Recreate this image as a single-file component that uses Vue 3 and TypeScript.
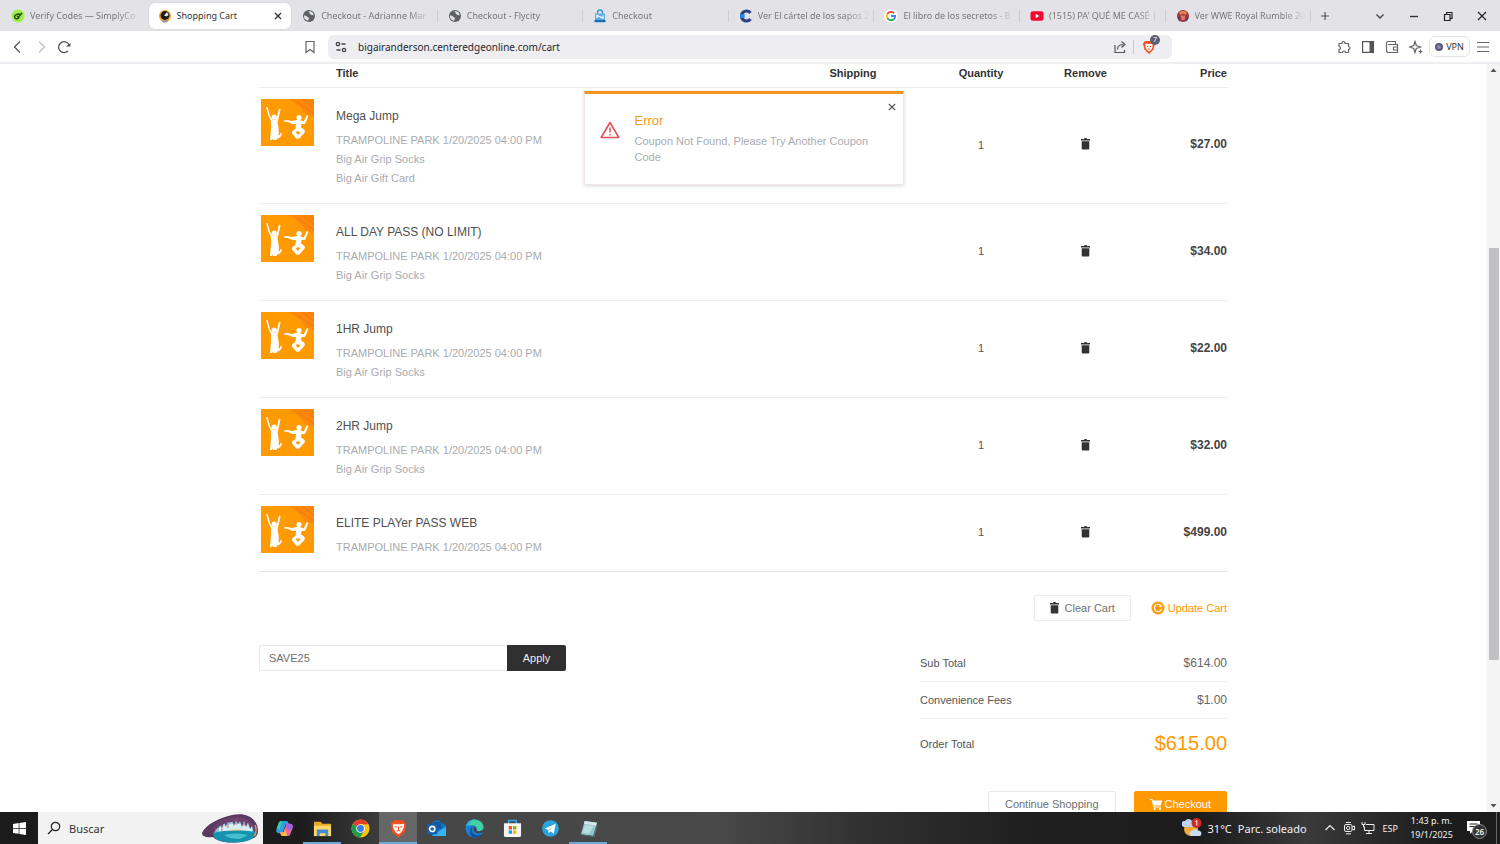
<script setup lang="ts">
import { ref } from 'vue'

interface Tab { title: string; icon: string; active?: boolean }
interface CartItem { title: string; lines: string[]; qty: number; price: string }

const tabs: Tab[] = [
  { title: 'Verify Codes — SimplyCo', icon: 'simply' },
  { title: 'Shopping Cart', icon: 'cart', active: true },
  { title: 'Checkout - Adrianne Mar', icon: 'globe' },
  { title: 'Checkout - Flycity', icon: 'globe' },
  { title: 'Checkout', icon: 'bag' },
  { title: 'Ver El cártel de los sapos 2', icon: 'cuevana' },
  { title: 'El libro de los secretos - B', icon: 'google' },
  { title: "(1515) PA' QUÉ ME CASÉ |", icon: 'youtube' },
  { title: 'Ver WWE Royal Rumble 20', icon: 'wwe' },
]

const park = 'TRAMPOLINE PARK 1/20/2025 04:00 PM'
const socks = 'Big Air Grip Socks'
const items: CartItem[] = [
  { title: 'Mega Jump', lines: [park, socks, 'Big Air Gift Card'], qty: 1, price: '$27.00' },
  { title: 'ALL DAY PASS (NO LIMIT)', lines: [park, socks], qty: 1, price: '$34.00' },
  { title: '1HR Jump', lines: [park, socks], qty: 1, price: '$22.00' },
  { title: '2HR Jump', lines: [park, socks], qty: 1, price: '$32.00' },
  { title: 'ELITE PLAYer PASS WEB', lines: [park], qty: 1, price: '$499.00' },
]

const apps = ['copilot', 'explorer', 'chrome', 'brave', 'outlook', 'edge', 'store', 'telegram', 'notepad']
const running = ['explorer', 'brave', 'notepad']
const coupon = ref('SAVE25')
const url = ref('bigairanderson.centeredgeonline.com/cart')
const search = ref('')
const toastOpen = ref(true)
</script>

<template>
  <div class="screen">
    <header class="tabbar">
      <div class="tabs" role="tablist">
        <button v-for="(t, i) in tabs" :key="i" class="tab" :class="{ active: t.active, split: i > 1 }" role="tab" :aria-selected="!!t.active">
          <svg class="fav" viewBox="0 0 14 14" aria-hidden="true">
            <template v-if="t.icon === 'simply'">
              <circle cx="7" cy="7" r="6.5" fill="#9df04a" />
              <path d="M11 3.800L7.400 8.200 6 7M8.600 5.200C6.400 4.600 3.600 6 3.600 8c0 2.200 3.400 2.200 4.800.6" fill="none" stroke="#26421a" stroke-width="1.400" />
            </template>
            <template v-else-if="t.icon === 'cart'">
              <circle cx="7" cy="7" r="6" fill="#efa029" />
              <circle cx="7" cy="6.500" r="4.400" fill="#1c1a1c" />
              <path d="M6 6.500l3-3.500 1.500 3-2 1.500z" fill="#e8eef5" />
              <path d="M4 11.500h6l-1 2H5z" fill="#8c99a8" />
            </template>
            <template v-else-if="t.icon === 'globe'">
              <circle cx="7" cy="7" r="6" fill="#5d6064" />
              <path d="M2 6.500c1.200 0 2.600.300 3.200 1.200.5.900 1.800.5 1.900 1.600 0 .900-.8 1-.9 2.400C3.500 11.300 1.700 9 2 6.500zM6.500 2.200c.2 1.200 1.200 1 1.200 2 0 .8.900 1 1.500 1.500.6.600 1.500.300 2.300.9C12 4 9.500 1.800 6.500 2.200z" fill="#e3e2e7" />
            </template>
            <template v-else-if="t.icon === 'bag'">
              <path d="M4.500 5V3.500a2.500 2.500 0 0 1 5 0V5" fill="none" stroke="#3b93d0" stroke-width="1.300" />
              <path d="M2 4.500h10V13H2z" fill="#5daee0" />
              <path d="M4 9V6.500l6 2.500V6.500" fill="none" stroke="#fff" stroke-width="1.200" />
              <path d="M1.500 11h11v2.200h-11z" fill="#1b6cae" />
            </template>
            <template v-else-if="t.icon === 'cuevana'">
              <path d="M11.500 4A5 5 0 1 0 11.500 10" fill="none" stroke="#2d3f86" stroke-width="3.200" />
              <path d="M1.200 7h4.500" stroke="#1f8cf0" stroke-width="3.500" />
            </template>
            <template v-else-if="t.icon === 'google'">
              <circle cx="7" cy="7" r="6.800" fill="#fff" />
              <path d="M10.200 4.200A4.300 4.300 0 0 0 3.300 5" fill="none" stroke="#ea4335" stroke-width="1.800" />
              <path d="M3.300 5a4.300 4.300 0 0 0 0 4" fill="none" stroke="#fbbc05" stroke-width="1.800" />
              <path d="M3.300 9a4.300 4.300 0 0 0 6.500 1.300" fill="none" stroke="#34a853" stroke-width="1.800" />
              <path d="M7 7h4.200a4.300 4.300 0 0 1-1.400 3.300" fill="none" stroke="#4285f4" stroke-width="1.800" />
            </template>
            <template v-else-if="t.icon === 'youtube'">
              <rect x=".5" y="2.200" width="13" height="9.600" rx="2.400" fill="#f8042f" />
              <path d="M5.600 4.800v4.400L9.400 7z" fill="#fff" />
            </template>
            <template v-else>
              <circle cx="7" cy="7" r="6" fill="#a8323a" />
              <path d="M3 3.500c2-2 6-2 8 0L9.500 6 7 4.500 4.500 6z" fill="#d98a4a" />
              <path d="M4.500 6.500h5L8.500 11h-3z" fill="#d67b70" />
              <path d="M2 8l2 4M12 8l-2 4" stroke="#47405f" stroke-width="1.500" />
            </template>
          </svg>
          <span class="tab-title">{{ t.title }}</span>
          <svg v-if="t.active" class="tab-close" viewBox="0 0 8 8" aria-hidden="true"><path d="M1 1l6 6M7 1L1 7" stroke="#333" stroke-width="1.400" /></svg>
        </button>
      </div>
      <button class="win plus" aria-label="New tab"><svg viewBox="0 0 12 12"><path d="M6 2v8M2 6h8" stroke="#55555a" stroke-width="1.200" /></svg></button>
      <div class="wins">
        <button class="win" aria-label="Search tabs"><svg viewBox="0 0 12 12"><path d="M2.500 4.500L6 8l3.500-3.500" fill="none" stroke="#444" stroke-width="1.400" /></svg></button>
        <button class="win" aria-label="Minimize"><svg viewBox="0 0 12 12"><path d="M2 6.500h8" stroke="#333" stroke-width="1.400" /></svg></button>
        <button class="win" aria-label="Restore"><svg viewBox="0 0 12 12"><path d="M2.500 4.500h5.500v6H2.500zM4.500 4.500V2.500h5.500v6H8" fill="none" stroke="#222" stroke-width="1.200" /></svg></button>
        <button class="win" aria-label="Close window"><svg viewBox="0 0 12 12"><path d="M2 2l8 8M10 2l-8 8" stroke="#222" stroke-width="1.200" /></svg></button>
      </div>
    </header>

    <nav class="toolbar" aria-label="Browser">
      <div class="nav-left">
        <button class="tool" aria-label="Back"><svg viewBox="0 0 16 16"><path d="M10 2.500L4.500 8l5.500 5.500" fill="none" stroke="#555" stroke-width="1.300" /></svg></button>
        <button class="tool" aria-label="Forward"><svg viewBox="0 0 16 16"><path d="M6 2.500L11.500 8 6 13.500" fill="none" stroke="#c4c4c6" stroke-width="1.300" /></svg></button>
        <button class="tool" aria-label="Reload"><svg viewBox="0 0 16 16"><path d="M12 12A5.500 5.500 0 1 1 13.500 7" fill="none" stroke="#555" stroke-width="1.300" /><path d="M10 7.600h4.500V4z" fill="#555" /></svg></button>
        <button class="tool mark" aria-label="Bookmark"><svg viewBox="0 0 16 16"><path d="M4 2.500h8v11L8 10.500 4 13.500z" fill="none" stroke="#66666a" stroke-width="1.200" /></svg></button>
      </div>
      <div class="omnibox">
        <button class="tool" aria-label="Site information"><svg viewBox="0 0 16 16" fill="none" stroke="#444" stroke-width="1.300"><circle cx="5" cy="5" r="1.700" /><path d="M8.500 5h4M3.500 11h4" /><circle cx="11" cy="11" r="1.700" /></svg></button>
        <input v-model="url" class="url" aria-label="Address" />
        <button class="tool" aria-label="Share"><svg viewBox="0 0 16 16" fill="none" stroke="#555" stroke-width="1.200"><path d="M3 6v7.500h9.500V11M5.500 10.500c0-3.500 2-5 6-5M9.500 2.500l3.500 3-3.500 3" /></svg></button>
        <span class="bar"></span>
        <button class="tool shield" aria-label="Shields">
          <svg viewBox="0 0 16 16"><path d="M4 2h8l2 2.500-1.500 6L8 15l-4.500-4.500L2 4.500z" fill="#f0501f" /><path d="M4.500 4.500L8 5l3.500-.5 0 4-1.500 2.500L8 12.500 6 11 4.500 8.500z" fill="#fff" /><path d="M6 7.500h1.200M8.800 7.500H10M7 10h2" stroke="#f0501f" /></svg>
          <span class="count">7</span>
        </button>
      </div>
      <div class="nav-right">
        <button class="tool" aria-label="Extensions"><svg viewBox="0 0 16 16"><path d="M3 4.500h3c-.5-2.700 3.500-2.700 3 0h3.500v3c2 .3 2 2.700 0 3v3H9.500c0-2-3-2-3 0H3v-3c2-.3 2-2.700 0-3z" fill="none" stroke="#66666a" stroke-width="1.200" /></svg></button>
        <button class="tool" aria-label="Sidebar"><svg viewBox="0 0 16 16"><path d="M2.600 2.600h10.800v10.800H2.600z" fill="none" stroke="#555" stroke-width="1.200" /><path d="M9.500 2.500h4v11h-4z" fill="#555" /></svg></button>
        <button class="tool" aria-label="Wallet"><svg viewBox="0 0 16 16" fill="none" stroke="#66666a" stroke-width="1.200"><path d="M2.500 4.500v7a2 2 0 0 0 2 2h9V5.500H4M2.500 4.500c0-1 .5-2 1.500-2h7.500v3M13.500 8H9.500v3h4" /></svg></button>
        <button class="tool" aria-label="Leo"><svg viewBox="0 0 16 16" fill="none" stroke="#66666a" stroke-width="1.200"><path d="M7 2.500l1.300 4L12.500 8l-4.200 1.500L7 13.500 5.700 9.500 1.800 8l3.900-1.500zM12.500 10.500v4M10.500 12.500h4" /></svg></button>
        <button class="vpn"><span class="vdot"></span>VPN</button>
        <button class="tool" aria-label="Menu"><svg viewBox="0 0 16 16"><path d="M2 3.500h12M2 8h12M2 12.500h12" stroke="#66666a" stroke-width="1.200" /></svg></button>
      </div>
    </nav>

    <div class="viewport">
      <main class="page">
        <div class="container">
          <table class="cart">
            <thead>
              <tr>
                <th class="c-img"></th>
                <th class="c-title">Title</th>
                <th class="c-mid">Shipping</th>
                <th class="c-mid">Quantity</th>
                <th class="c-rem">Remove</th>
                <th class="c-price">Price</th>
              </tr>
            </thead>
            <tbody>
              <tr v-for="item in items" :key="item.title">
                <td class="c-img">
                  <svg class="thumb" viewBox="0 0 53 47" role="img" aria-label="Trampoline jumpers">
                    <path d="M0 0h53v47H0z" fill="#ff9a03" />
                    <path d="M28 0h25v18l-8-2-6-8z" fill="#fb8a0c" />
                    <path d="M41 0l12 9M36 3l17 12M47 0l6 4" stroke="#f57c10" stroke-width="1.500" />
                    <g fill="#fff">
                      <path d="M5 8.500l1.500-.5 1.500 5 1 4 2.500 3.500h3.500l1.500-4 .5-4 1.200-2.800 1.300.3-.8 4.500-1.200 5-1 4 .8 4 .6 5-.3 4 1.600-.8.300-2 1.500.8-.8 2.500-2.700 2.500-1.500-.2-.2 1.700H12l-.3-1.700-.7 1.700H9l.6-7 .5-6-.3-6.500-2.300-4.500-1.300-5z" />
                      <circle cx="13.200" cy="18" r="2.600" />
                      <path d="M23 21.500l3-.4 5 .8 4-1 3-.2 4.500 1.700 2-3.500 1.300-3 1.500.5-1.200 4-2.100 4.500-3.500.2-.5 3.500 2.500 1.500 1.500 2-.7 2-3.300 3.500-1.500 1.800-3 .3-4.500-5.300.3-2.500 3.200-2 .5-5-3.500 0-4.500-1.800-4-.5z" />
                      <circle cx="38" cy="18.500" r="2.600" />
                    </g>
                    <path d="M34.500 33l2.500 3 2.500-3-2.500-.8z" fill="#ff9a03" />
                  </svg>
                </td>
                <td class="c-title">
                  <div class="name">{{ item.title }}</div>
                  <div v-for="l in item.lines" :key="l" class="line">{{ l }}</div>
                </td>
                <td></td>
                <td class="c-mid">{{ item.qty }}</td>
                <td class="c-rem">
                  <button class="trash" :aria-label="'Remove ' + item.title"><svg class="bin" viewBox="0 0 9 12"><path d="M0 1h3l.5-1h2L6 1h3v1.500H0zM.7 3.200h7.600V10.500a1 1 0 0 1-1 1H1.700a1 1 0 0 1-1-1z" fill="#333" /></svg></button>
                </td>
                <td class="c-price">{{ item.price }}</td>
              </tr>
            </tbody>
          </table>

          <div class="actions">
            <button class="btn"><svg class="bin" viewBox="0 0 9 12"><path d="M0 1h3l.5-1h2L6 1h3v1.500H0zM.7 3.200h7.600V10.500a1 1 0 0 1-1 1H1.700a1 1 0 0 1-1-1z" fill="#333" /></svg>Clear Cart</button>
            <a class="update" href="#"><svg viewBox="0 0 14 14"><circle cx="7" cy="7" r="6.500" fill="#ff9900" /><path d="M9.500 4.200A3.700 3.700 0 1 0 10.700 7.200" fill="none" stroke="#fff" stroke-width="1.200" /><path d="M7.500 5.500L10.500 3v3.200z" fill="#fff" /></svg>Update Cart</a>
          </div>

          <div class="lower">
            <form class="coupon" @submit.prevent>
              <input v-model="coupon" aria-label="Coupon code" />
              <button type="submit">Apply</button>
            </form>
            <section class="totals">
              <dl>
                <div><dt>Sub Total</dt><dd>$614.00</dd></div>
                <div><dt>Convenience Fees</dt><dd>$1.00</dd></div>
                <div class="grand"><dt>Order Total</dt><dd>$615.00</dd></div>
              </dl>
            </section>
          </div>

          <div class="finish">
            <button class="btn">Continue Shopping</button>
            <button class="btn primary"><svg class="basket" viewBox="0 0 12 12"><path d="M0 1h2.300l.5 1.500H12l-1.300 5H4.200l.3 1H11v1H3.500L1.700 2H0z" fill="#fff" /><circle cx="4.600" cy="10.900" r="1.100" fill="#fff" /><circle cx="9.900" cy="10.900" r="1.100" fill="#fff" /></svg>Checkout</button>
          </div>
        </div>

        <div v-if="toastOpen" class="toast" role="alert">
          <svg class="warn" viewBox="0 0 20 18"><path d="M10 1.500L1.200 16.500h17.600z" fill="none" stroke="#e2505c" stroke-width="1.600" stroke-linejoin="round" /><path d="M10 6.500v5M10 13v1.600" stroke="#e2505c" stroke-width="1.500" /></svg>
          <div class="toast-body">
            <strong>Error</strong>
            <p>Coupon Not Found, Please Try Another Coupon Code</p>
          </div>
          <button class="toast-close" aria-label="Dismiss" @click="toastOpen = false"><svg viewBox="0 0 8 8"><path d="M.8.8l6.400 6.400M7.200.8L.8 7.200" stroke="#444" stroke-width="1.100" /></svg></button>
        </div>
      </main>
      <div class="scroll" aria-hidden="true">
        <svg viewBox="0 0 13 13"><path d="M3.500 8h6l-3-3.500z" fill="#505050" /></svg>
        <div class="track"><div class="gap-top"></div><div class="knob"></div><div class="gap-bottom"></div></div>
        <svg viewBox="0 0 13 13"><path d="M3.500 5h6l-3 3.500z" fill="#505050" /></svg>
      </div>
    </div>

    <footer class="taskbar">
      <button class="start" aria-label="Start"><svg viewBox="0 0 13 13"><path d="M0 1.900l5.700-.8v5H0zM6.400 1L13 0v6.100H6.400zM0 6.800h5.700v5L0 11zM6.400 6.800H13V13l-6.600-1z" fill="#fff" /></svg></button>
      <label class="search">
        <svg class="lens" viewBox="0 0 14 14"><circle cx="8.500" cy="5.500" r="4.200" fill="none" stroke="#222" stroke-width="1.200" /><path d="M5.500 8.500L1 13" stroke="#222" stroke-width="1.200" /></svg>
        <input v-model="search" placeholder="Buscar" aria-label="Buscar" />
        <svg class="cave" viewBox="0 0 56 30">
          <path d="M0 20C3 13 12 8 20 5 30 1 40 0 46 3c7 3 10 9 10 15 0 5-3 7-7 8-4 2-12 3.500-19 3.500-8 0-15-1.500-19-5.500-5 1-11 0-11-4z" fill="#5a3a60" />
          <path d="M12 21c1-6 8-11 17-12 9-2 19 0 22 5l1 7z" fill="#8fd3e2" />
          <path d="M17 15c8-5 22-6 33-1v6l-33 1z" fill="#d9eef0" />
          <path d="M26 18c5-3 12-3 16 1v3H24z" fill="#f6d9a4" />
          <path d="M11 20c12-3 28-3 43-1-1 6-6 9-14 10-12 1.500-24 0-28-5z" fill="#1492ae" />
          <path d="M22 22c8-2 16-2 24 0l-8 4c-6 0-11-1-16-4z" fill="#46c0d0" />
          <path d="M8 20C9 13 18 7 28 5c9-2 19-1 24 8l0 6-2-6-2 3-2-7-2 5-2-6-2 6-2-6-2 3-2-4-2 6-2-6-2 3-2-3-2 7-2-6-2 7-2-5-2 6-2-4-2 5-2-3-2 4z" fill="#6d4270" />
          <path d="M14 15v4M20 12v6M26 9v6M34 7v5M42 8v5" stroke="#b5708f" stroke-width=".9" />
          <path d="M53 12c1.500 3 1.500 8-.5 11" fill="none" stroke="#e0936a" stroke-width="1.500" />
        </svg>
      </label>
      <div class="apps">
        <button v-for="a in apps" :key="a" class="app" :class="{ run: running.includes(a), focus: a === 'brave' }" :aria-label="a">
          <svg viewBox="0 0 20 20">
            <template v-if="a === 'copilot'">
              <path d="M7 2h6l2 4h-4l-3 9H4C1 15 1 12 2 9l2-5c.5-1.500 1.500-2 3-2z" fill="#2b9fe8" />
              <path d="M2 10l2-6c.5-1.500 1.500-2 3-2L5 11z" fill="#38cf9c" />
              <path d="M13 18H7l-2-4h4l3-9h4c3 0 3 3 2 6l-2 5c-.5 1.500-1.500 2-3 2z" fill="#e865a4" />
              <path d="M5 14h4l1.500-4L13 18H7z" fill="#f7b54a" />
              <path d="M12 5h4c3 0 3 3 2 6h-5z" fill="#9a63e8" />
            </template>
            <template v-else-if="a === 'explorer'">
              <path d="M1 3h7l2 2h9v13H1z" fill="#e8a928" /><path d="M1 7h18v11H1z" fill="#ffd667" /><path d="M4 11h12v7h-3v-3H7v3H4z" fill="#3b8fd8" />
            </template>
            <template v-else-if="a === 'chrome'">
              <circle cx="10" cy="10" r="9.500" fill="#fbc116" />
              <path d="M10 10L1.800 5.200A9.500 9.500 0 0 1 18.200 5.500H10z" fill="#e33b2e" />
              <path d="M10 10L1.800 5.200A9.500 9.500 0 0 0 9.500 19.500L14 12z" fill="#229a47" />
              <circle cx="10" cy="10" r="4.600" fill="#fff" /><circle cx="10" cy="10" r="3.600" fill="#3b7de9" />
            </template>
            <template v-else-if="a === 'brave'">
              <path d="M6 1h8l4 4-1.500 9L10 19.500 3.500 14 2 5z" fill="#f5501f" />
              <path d="M4.500 5L7 5.500h6l2.500-.5.500 3-2.500 5.500-3.500 2.500-3.500-2.500L4 8z" fill="#fff" />
              <path d="M6 8l2.500.6M14 8l-2.500.6M10 7.500v4M8 13l2-1 2 1" stroke="#f5501f" stroke-width="1.100" fill="none" />
            </template>
            <template v-else-if="a === 'outlook'">
              <path d="M6 3l6-2 8 6v11H5z" fill="#1474c4" /><path d="M7 3h8v7H7z" fill="#0f59a4" /><path d="M5 18l15-10v10z" fill="#35b4ef" />
              <rect x="0" y="5" width="11" height="11" rx="1" fill="#1060ad" /><circle cx="5.500" cy="10.500" r="2.700" fill="none" stroke="#fff" stroke-width="1.700" />
            </template>
            <template v-else-if="a === 'edge'">
              <circle cx="10" cy="10" r="9.500" fill="#1a7fd0" />
              <path d="M1 8C2 3 6 .500 10 .500c6 0 9.500 4 9.500 8 0 3-2.500 4.500-5 4.500-2 0-3-.5-2-2 .5-3-2-4.500-5-4.500S2 7 1 8z" fill="#45cfa6" />
              <path d="M1 8C2 3 6 .500 10 .500c-3 1-5 3-5.500 5.500z" fill="#2aafe0" />
              <path d="M8 8c-2 3-1 8 4 9 2 .4 4 0 5.500-1-2 3-6 4-9 3.300C5 18 4 11 8 8z" fill="#124f9e" />
              <path d="M10 8c-2 2-1 6 3 7 2.500.5 5-.5 6-1.500l.3-2.500-4 2c-3 0-4-1-3-2.500z" fill="#444" />
            </template>
            <template v-else-if="a === 'store'">
              <path d="M6 5V1.500h8V5" fill="none" stroke="#2aa9e8" stroke-width="1.600" /><path d="M1 4.500h18V17a2 2 0 0 1-2 2H3a2 2 0 0 1-2-2z" fill="#f5f5f5" />
              <path d="M6 7.500h3.500V11H6z" fill="#f25022" /><path d="M10.500 7.500H14V11h-3.500z" fill="#7fba00" /><path d="M6 12h3.500v3.500H6z" fill="#00a4ef" /><path d="M10.500 12H14v3.500h-3.500z" fill="#ffb900" />
            </template>
            <template v-else-if="a === 'telegram'">
              <circle cx="10" cy="10" r="8.800" fill="#2ba3dc" /><path d="M4 10l11.500-5-2 10.500-3.500-2.500-2 2-.5-3.500z" fill="#fff" /><path d="M7.500 11.500L13 7.500l-4.500 5" fill="#9cc9e4" />
            </template>
            <template v-else>
              <path d="M6 2l13 2-4 14-13-2z" fill="#8fc5cf" /><path d="M6 2l13 2-1 3L5.200 5z" fill="#d7e6e8" /><path d="M2 16l13 2 4-13 .5 1-3 13L3 17z" fill="#5c6f74" /><path d="M6.500 6l9 1.500-5 8-7-1z" fill="#b9dce2" />
            </template>
          </svg>
        </button>
      </div>
      <div class="tray">
        <button class="weather">
          <svg viewBox="0 0 20 20"><circle cx="9" cy="11" r="7" fill="#f6a935" /><path d="M2 9a3 3 0 0 1 1-6 4 4 0 0 1 7 0 3 3 0 0 1 0 6z" fill="#bdd3f3" /><path d="M9 18a3 3 0 0 1 1-5.500 4 4 0 0 1 6 0A3 3 0 0 1 18 18z" fill="#c9dbf5" /><circle cx="14.500" cy="5" r="5" fill="#cf2a27" /><path d="M13.500 3.500l1.300-1v5" fill="none" stroke="#fff" /></svg>
          <span>31°C</span><span>Parc. soleado</span>
        </button>
        <button class="ticon" aria-label="Hidden icons"><svg viewBox="0 0 14 14"><path d="M2.500 9L7 4.500 11.500 9" fill="none" stroke="#eee" stroke-width="1.200" /></svg></button>
        <button class="ticon" aria-label="Camera"><svg viewBox="0 0 14 14" fill="none" stroke="#eee"><rect x="2.500" y="3.500" width="7.500" height="7" rx="1.500" /><circle cx="6.200" cy="7" r="1.700" /><path d="M10 6l2.500-1v4L10 8M4 1.500h5M4 12.800h5" /></svg></button>
        <button class="ticon" aria-label="Network"><svg viewBox="0 0 14 14" fill="none" stroke="#eee"><path d="M5 3.500h8v6H3.500V6M8 9.500v3M5 12.500h6M1 1v2.500h3V1M2.500 3.500V6H4" /></svg></button>
        <button class="lang">ESP</button>
        <button class="clock"><span>1:43 p. m.</span><span>19/1/2025</span></button>
        <button class="notes" aria-label="Notifications"><svg viewBox="0 0 14 14"><path d="M0 0h13v10H6l-3 3v-3H0z" fill="#fff" /><path d="M2.500 3h8M2.500 5.500h8" stroke="#222" /></svg><span>26</span></button>
        <span class="peek"></span>
      </div>
    </footer>
  </div>
</template>

<style>
body { margin: 0; background: #fff; overflow: hidden; }
</style>

<style scoped>
* { box-sizing: border-box; }
button, input { font: inherit; color: inherit; border: 0; background: none; padding: 0; margin: 0; }
svg { display: block; flex: none; }
.screen { height: 100vh; display: flex; flex-direction: column; font-family: "Noto Sans", "Open Sans", sans-serif; }

.tabbar { display: flex; align-items: center; height: 31px; background: #e3e2e7; flex: none; }
.tabs { display: flex; flex: 1; min-width: 0; padding-left: 1px; height: 100%; align-items: center; }
.tab { flex: 1 1 0; min-width: 0; height: 26px; display: flex; align-items: center; gap: 5px; padding: 0 2px 0 10px; position: relative; font-size: 9px; color: #77777b; text-align: left; }
.tab.active { background: #fff; color: #333; border-radius: 6px; margin: 0 1px 0 2px; padding: 0 0 0 9px; box-shadow: 0 0 2px #ccc; }
.tab.split::after { content: ""; position: absolute; right: 0; top: 7px; height: 12px; width: 1px; background: #cfced3; }
.fav { width: 14px; height: 14px; }
.tab-title { flex: 1; overflow: hidden; white-space: nowrap; line-height: 16px; mask-image: linear-gradient(to right, #000 75%, transparent 98%); }
.tab.active .tab-title { mask-image: none; }
.tab-close { width: 8px; height: 8px; margin-right: 9px; }
.win { width: 30px; height: 30px; display: grid; place-items: center; }
.plus { width: 28px; }
.win svg { width: 12px; height: 12px; }
.wins { display: flex; margin-left: 26px; gap: 4px; padding-right: 3px; }

.toolbar { display: grid; grid-template-columns: 328px minmax(0, 1fr) 328px; align-items: center; height: 33px; background: #fff; border-bottom: 2px solid #efeff3; flex: none; }
.nav-left { display: flex; gap: 7px; padding: 0 10px 0 10px; }
.mark { margin-left: auto; }
.tool { width: 16px; height: 16px; flex: none; }
.tool svg { width: 16px; height: 16px; }
.omnibox { display: flex; align-items: center; height: 24px; background: #eeedf1; border-radius: 6px; padding: 0 15px 0 5px; gap: 5px; }
.url { flex: 1; min-width: 0; font-size: 10px; color: #27272b; padding-left: 4px; outline: 0; }
.bar { width: 1px; height: 14px; background: #c8c8cc; }
.shield { position: relative; margin-left: 2px; }
.count { position: absolute; left: 9px; top: -4px; width: 10px; height: 10px; border-radius: 50%; background: #5a6072; color: #fff; font-size: 7px; line-height: 10px; text-align: center; }
.nav-right { display: flex; align-items: center; justify-content: flex-end; gap: 8px; padding-right: 9px; }
.vpn { width: 41px; height: 21px; border: 1px solid #e4e4e8; border-radius: 6px; font-size: 9px; display: flex; align-items: center; justify-content: center; gap: 3px; color: #333; margin: 0 -3px; }
.vdot { width: 8px; height: 8px; border-radius: 50%; background: #8d8dac; border: 2px solid #57577c; }

.viewport { flex: 1; min-height: 0; display: flex; }
.page { flex: 1; min-width: 0; overflow: hidden; position: relative; font-family: "Liberation Sans", Arial, sans-serif; font-size: 11px; color: #555; }
.container { max-width: 969px; margin: 0 auto; }
.cart { width: 100%; border-collapse: separate; border-spacing: 0; table-layout: fixed; border-bottom: 1px solid #e6e6e6; }
.cart th { height: 24px; padding: 0 0 5px; line-height: 18px; font-size: 11px; font-weight: 700; color: #333; border-bottom: 1px solid #ececec; vertical-align: top; }
.cart td { padding: 0; border-bottom: 1px solid #ececec; vertical-align: middle; }
.cart tbody tr:last-child td { border-bottom: 0; }
.cart .c-img { width: 77px; vertical-align: top; text-align: left; }
.cart td.c-img { padding: 11px 0 0 2px; }
.cart .c-title { text-align: left; vertical-align: top; }
.cart td.c-title { padding: 18px 0 16px; }
.cart tbody tr:last-child td.c-title { padding-bottom: 15px; }
.cart .c-mid { width: 128px; text-align: center; }
.cart td.c-mid { padding-bottom: 2px; }
.cart .c-rem { width: 81px; text-align: center; }
.cart td.c-rem { padding-bottom: 4px; }
.cart .c-price { width: 102px; text-align: right; padding-right: 1px; }
.cart td.c-price { font-size: 12px; font-weight: 700; color: #444; padding-bottom: 3px; }
.thumb { width: 53px; height: 47px; }
.name { font-size: 12px; line-height: 20px; padding-bottom: 4px; color: #505050; }
.line { line-height: 20px; height: 19px; color: #a9acb0; }
.trash { display: inline-block; vertical-align: middle; }
.bin { width: 9px; height: 12px; }

.actions { display: flex; justify-content: flex-end; align-items: center; gap: 20px; margin-top: 23px; padding-right: 1px; }
.btn { height: 26px; display: flex; align-items: center; gap: 6px; padding: 0 15px; background: #fff; border: 1px solid #e9e9e9; border-radius: 2px; color: #707070; }
.update { display: flex; align-items: center; gap: 3px; color: #ff9900; text-decoration: none; }
.update svg { width: 14px; height: 14px; }
.lower { display: flex; justify-content: space-between; align-items: flex-start; margin-top: 24px; }
.coupon { display: flex; width: 307px; height: 26px; }
.coupon input { flex: 1; min-width: 0; border: 1px solid #e9e9e9; border-right: 0; padding: 0 9px; color: #707070; outline: 0; }
.coupon button { width: 59px; background: #303030; color: #eee; border-radius: 0 2px 2px 0; }
.totals { width: 308px; }
dl, dd { margin: 0; }
dl > div { display: flex; justify-content: space-between; align-items: center; height: 37px; border-bottom: 1px solid #ececec; padding-right: 1px; }
dl > div.grand { height: 49px; border: 0; }
dd { font-size: 12px; color: #666; }
.grand dd { font-size: 20px; color: #ff9900; }
.finish { display: flex; justify-content: flex-end; gap: 18px; margin-top: 23px; padding-right: 1px; }
.finish .btn { padding: 0 16px; }
.finish .primary { background: #ff9900; border-color: #ff9900; color: #fff; gap: 3px; padding: 0 15px; }
.basket { width: 12px; height: 12px; }

.toast { position: absolute; top: 27px; left: 50%; margin-left: -160px; width: 320px; min-height: 94px; background: #fff; border: 1px solid #f3e6e6; border-top: 3px solid #f7941d; box-shadow: 0 1px 4px rgba(0, 0, 0, .16); display: flex; gap: 15px; padding: 19px 24px 17px 15px; }
.warn { width: 20px; height: 18px; margin-top: 8px; }
.toast-body strong { display: block; font-weight: 400; font-size: 13px; line-height: 16px; color: #f29a1f; }
.toast-body p { margin: 4px 0 0; line-height: 16px; color: #a9acb0; }
.toast-close { position: absolute; right: 7px; top: 9px; width: 8px; height: 8px; }

.scroll { width: 13px; background: #f4f4f5; display: flex; flex-direction: column; flex: none; }
.scroll svg { width: 13px; height: 13px; }
.track { flex: 1; display: flex; flex-direction: column; align-items: center; }
.gap-top { flex: 171; }
.knob { flex: 412; width: 10px; background: #c1c1c3; }
.gap-bottom { flex: 139; }

.taskbar { height: 32px; flex: none; display: flex; align-items: stretch; color: #f2f2f2; font-size: 10px; background: linear-gradient(to right, #1b1b1b 0, #1c1c1c 20%, #464646 27%, #484848 48%, #303030 58%, #202020 68%, #1c1c1c 80%, #3a3a3a 87%, #1c1c1c 96%); }
.start { width: 38px; display: grid; place-items: center; }
.start svg { width: 13px; height: 13px; }
.search { width: 225px; background: #f2f2f2; display: flex; align-items: center; padding: 0 5px 0 9px; gap: 8px; color: #333; font-size: 11px; }
.search input { flex: 1; min-width: 0; outline: 0; }
.search input::placeholder { color: #333; opacity: 1; }
.lens { width: 14px; height: 14px; }
.cave { width: 56px; height: 30px; }
.apps { display: flex; padding-left: 2px; }
.app { width: 38px; display: grid; place-items: center; border-bottom: 2px solid transparent; padding-top: 2px; }
.app svg { width: 19px; height: 19px; }
.app.run { border-bottom-color: #6fa9dc; }
.app.focus { background: #666; }
.tray { margin-left: auto; display: flex; align-items: center; }
.weather { display: flex; align-items: center; gap: 6px; font-size: 11px; margin-right: 16px; }
.weather svg { width: 20px; height: 20px; }
.ticon { width: 14px; height: 14px; margin-right: 5px; }
.ticon svg { width: 14px; height: 14px; }
.lang { margin-left: 3px; font-size: 9px; }
.clock { display: flex; flex-direction: column; align-items: center; font-size: 9px; line-height: 14px; width: 67px; }
.notes { position: relative; width: 20px; height: 16px; margin-left: 2px; }
.notes svg { width: 14px; height: 14px; }
.notes span { position: absolute; left: 5px; top: 4px; width: 15px; height: 15px; border-radius: 50%; background: #333; border: 1px solid #888; font-size: 8px; font-weight: 600; line-height: 13px; text-align: center; }
.peek { width: 1px; align-self: stretch; background: #666; margin: 0 3px 0 9px; }
</style>
